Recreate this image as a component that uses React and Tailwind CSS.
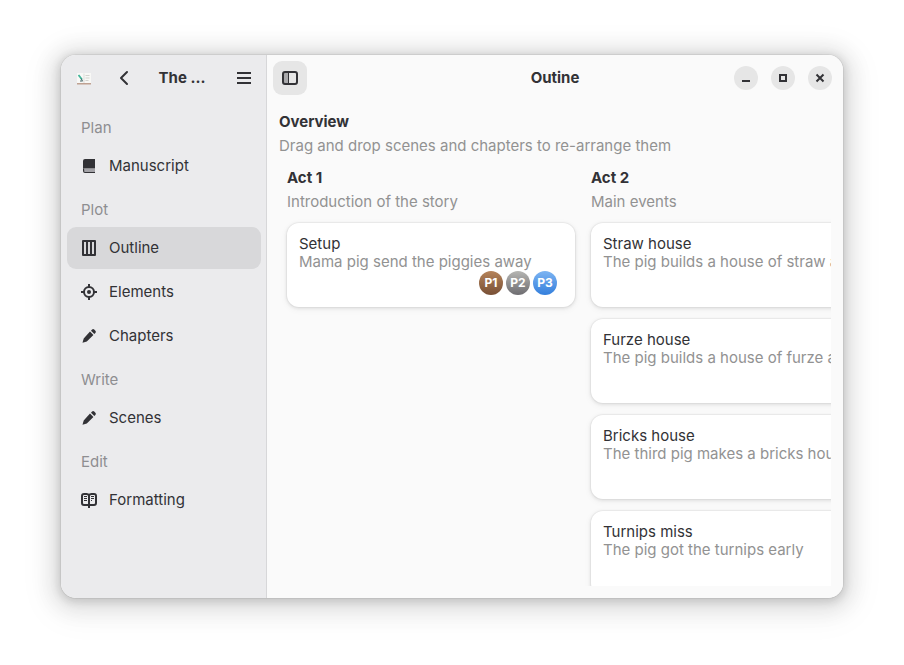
const acts = [
  {
    title: "Act 1",
    summary: "Introduction of the story",
    scenes: [{ title: "Setup", summary: "Mama pig send the piggies away", cast: ["P1", "P2", "P3"] }],
  },
  {
    title: "Act 2",
    summary: "Main events",
    scenes: [
      { title: "Straw house", summary: "The pig builds a house of straw a", cast: [] },
      { title: "Furze house", summary: "The pig builds a house of furze a", cast: [] },
      { title: "Bricks house", summary: "The third pig makes a bricks hous", cast: [] },
      { title: "Turnips miss", summary: "The pig got the turnips early", cast: [] },
    ],
  },
];

const castColors = {
  P1: "from-[#b5835a] to-[#785036]",
  P2: "from-[#b6b6b3] to-[#6e6d71]",
  P3: "from-[#7cb4f2] to-[#337fdc]",
};

function Svg({ children }) {
  return (
    <svg className="size-4 shrink-0" viewBox="0 0 16 16" fill="none" aria-hidden="true">
      {children}
    </svg>
  );
}

function BookIcon() {
  return (
    <Svg>
      <path d="M4 1h10v9.500H2V3a2 2 0 0 1 2-2z" fill="currentColor" />
      <path d="M4 11h10v3H4a1.500 1.500 0 0 1 0-3z" fill="#a4a3a8" />
      <path d="M2 10.500h1.200v2.500c0 .6.400 1 1 1H14v1H4a2 2 0 0 1-2-2z" fill="currentColor" />
    </Svg>
  );
}

function ColumnsIcon() {
  return (
    <Svg>
      <path
        fillRule="evenodd"
        d="M2 0h12a1 1 0 0 1 1 1v14a1 1 0 0 1-1 1H2a1 1 0 0 1-1-1V1a1 1 0 0 1 1-1zM3 2v12h2V2zM7 2v12h2V2zM11 2v12h2V2z"
        fill="currentColor"
      />
    </Svg>
  );
}

function TargetIcon() {
  return (
    <Svg>
      <circle cx="8" cy="8" r="5" stroke="currentColor" strokeWidth="2" />
      <circle cx="8" cy="8" r="2" fill="currentColor" />
      <path d="M8 0v3M8 13v3M0 8h3M13 8h3" stroke="currentColor" strokeWidth="2" />
    </Svg>
  );
}

function PencilIcon() {
  return (
    <Svg>
      <path
        d="M9 3.600l3.400 3.400-6.600 6.600L1.500 14.800l1.200-4.300zM10 2.700l1.100-1.100a1.500 1.500 0 0 1 2.100 0l1.200 1.200a1.500 1.500 0 0 1 0 2.100l-1.100 1.100z"
        fill="currentColor"
      />
    </Svg>
  );
}

function OpenBookIcon() {
  return (
    <Svg>
      <path
        d="M8 3.500C7.500 2.300 6.500 2 5.500 2H3a2 2 0 0 0-2 2v7a2 2 0 0 0 2 2h10a2 2 0 0 0 2-2V4a2 2 0 0 0-2-2h-2.500C9.500 2 8.500 2.300 8 3.500z"
        stroke="currentColor"
        strokeWidth="2"
      />
      <path d="M8 3v13" stroke="currentColor" strokeWidth="2" />
      <path d="M3 4.500h3M3 6.500h3M3 8.500h3M10 4.500h3M10 6.500h3M10 8.500h1" stroke="currentColor" />
    </Svg>
  );
}

const navigation = [
  { label: "Plan", items: [{ name: "Manuscript", Icon: BookIcon }] },
  {
    label: "Plot",
    items: [
      { name: "Outline", Icon: ColumnsIcon, active: true },
      { name: "Elements", Icon: TargetIcon },
      { name: "Chapters", Icon: PencilIcon },
    ],
  },
  { label: "Write", items: [{ name: "Scenes", Icon: PencilIcon }] },
  { label: "Edit", items: [{ name: "Formatting", Icon: OpenBookIcon }] },
];

function Sidebar() {
  return (
    <aside className="flex w-[206px] shrink-0 flex-col bg-[#ebebed] shadow-[inset_-1px_0_#d7d7d9]">
      <header className="flex h-[46px] items-center gap-1.5 px-1.5">
        <span className="flex size-[34px] items-center justify-center">
          <Svg>
            <path d="M1 3h14v10H1z" fill="#f8f8f6" />
            <path d="M1 13h14v1.500H1z" fill="#bfa192" />
            <path d="M8 3.500v9.500" stroke="#dededb" />
            <path d="M9.500 5.500h4M9.500 8h4M9.500 10.500h3" stroke="#d3d3ce" />
            <path d="M2.500 5L6 9.500" stroke="#41b59a" strokeWidth="1.800" />
            <path d="M5.200 8.500l1.300 2.700M4 11h2.500" stroke="#47686b" />
          </Svg>
        </span>
        <button aria-label="Back" className="flex size-[34px] items-center justify-center rounded-[9px]">
          <Svg>
            <path d="M11 2L5 8l6 6" stroke="currentColor" strokeWidth="2" strokeLinecap="round" strokeLinejoin="round" />
          </Svg>
        </button>
        <h2 className="min-w-0 flex-1 truncate pr-1 text-center font-bold">The ...</h2>
        <button aria-label="Main menu" className="flex size-[34px] items-center justify-center rounded-[9px]">
          <Svg>
            <path d="M1 3h14M1 8h14M1 13h14" stroke="currentColor" strokeWidth="2" />
          </Svg>
        </button>
      </header>
      <nav className="px-1.5 pt-1">
        {navigation.map((group) => (
          <section key={group.label}>
            <h3 className="flex h-10 items-center px-3.5 pt-1.5 text-[#8e8e91]">{group.label}</h3>
            <ul className="flex flex-col gap-0.5">
              {group.items.map(({ name, Icon, active }) => (
                <li key={name}>
                  <button
                    aria-current={active ? "page" : undefined}
                    className={`flex h-[42px] w-full items-center gap-3 rounded-[9px] px-3.5 text-left ${active ? "bg-[#d8d8da]" : ""}`}
                  >
                    <Icon />
                    {name}
                  </button>
                </li>
              ))}
            </ul>
          </section>
        ))}
      </nav>
    </aside>
  );
}

function WindowButton({ label, children }) {
  return (
    <button aria-label={label} className="flex size-6 items-center justify-center rounded-full bg-[#e6e6e6]">
      <Svg>{children}</Svg>
    </button>
  );
}

function SceneCard({ scene }) {
  return (
    <li className="h-[84px] shrink-0 rounded-xl bg-white p-3 leading-[18px] shadow-[0_0_0_1px_rgba(0,0,6,0.03),0_1px_3px_1px_rgba(0,0,6,0.07),0_2px_6px_2px_rgba(0,0,6,0.03)]">
      <h4>{scene.title}</h4>
      <p className="truncate text-[#929292]">{scene.summary}</p>
      <div className="flex justify-end gap-[3px] pr-1.5">
        {scene.cast.map((name) => (
          <span
            key={name}
            className={`flex size-6 items-center justify-center rounded-full bg-linear-to-b text-xs font-bold text-white ${castColors[name]}`}
          >
            {name}
          </span>
        ))}
      </div>
    </li>
  );
}

export default function App() {
  return (
    <div className="h-screen bg-white px-[61px] pt-[55px] pb-[67px] font-['Inter',sans-serif] text-[15px] leading-6 text-[#323236]">
      <div className="flex h-full overflow-hidden rounded-[15px] shadow-[0_0_0_1px_rgba(0,0,0,0.05),0_2px_8px_2px_rgba(0,0,0,0.13),0_3px_20px_10px_rgba(0,0,0,0.09),0_6px_32px_16px_rgba(0,0,0,0.04)]">
        <Sidebar />
        <main className="flex min-w-0 flex-1 flex-col bg-[#fafafa]">
          <header className="grid h-[46px] shrink-0 grid-cols-[1fr_auto_1fr] items-center px-1.5">
            <button
              aria-label="Toggle sidebar"
              className="flex size-[34px] items-center justify-center rounded-[9px] bg-[#e6e6e6]"
            >
              <Svg>
                <path d="M2 3h5v10H2z" fill="#a9a9ab" />
                <rect x="1" y="2" width="14" height="12" rx="2" stroke="currentColor" strokeWidth="2" />
                <path d="M6.500 2v12" stroke="currentColor" />
              </Svg>
            </button>
            <h1 className="font-bold">Outine</h1>
            <div className="flex justify-end gap-[13px] pr-[5px]">
              <WindowButton label="Minimize">
                <path d="M4 10h8v2H4z" fill="currentColor" />
              </WindowButton>
              <WindowButton label="Maximize">
                <path d="M5 5h6v6H5z" stroke="currentColor" strokeWidth="2" />
              </WindowButton>
              <WindowButton label="Close">
                <path d="M4.500 4.500l7 7M11.500 4.500l-7 7" stroke="currentColor" strokeWidth="2" />
              </WindowButton>
            </div>
          </header>
          <div className="flex min-h-0 flex-1 flex-col px-3 pt-[9px] pb-3">
            <h2 className="font-bold">Overview</h2>
            <p className="text-[#929292]">Drag and drop scenes and chapters to re-arrange them</p>
            <div className="flex min-h-0 flex-1 gap-4 overflow-hidden px-2 pt-2">
              {acts.map((act) => (
                <section key={act.title} className="w-72 shrink-0">
                  <h3 className="font-bold">{act.title}</h3>
                  <p className="text-[#929292]">{act.summary}</p>
                  <ul className="flex flex-col gap-3 pt-[9px]">
                    {act.scenes.map((scene) => (
                      <SceneCard key={scene.title} scene={scene} />
                    ))}
                  </ul>
                </section>
              ))}
            </div>
          </div>
        </main>
      </div>
    </div>
  );
}
